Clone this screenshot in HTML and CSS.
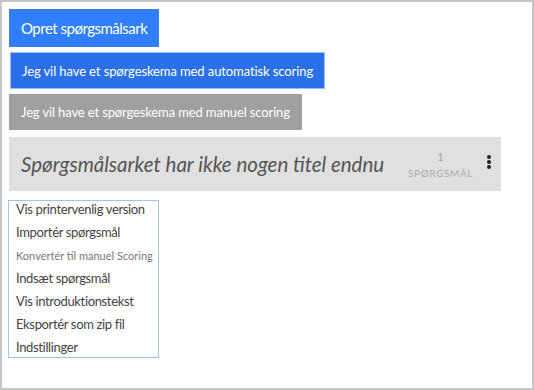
FILE: index.html
```html
<!DOCTYPE html>
<html lang="da">
<head>
  <meta charset="UTF-8" />
  <title>Spørgsmålsark</title>
  <link rel="stylesheet" href="styles.css">
</head>
<body>

  <div class="frame">
    <button class="btn btn-create">Opret spørgsmålsark</button>
    <button class="btn btn-auto">Jeg vil have et spørgeskema med automatisk scoring</button>
    <button class="btn btn-manual">Jeg vil have et spørgeskema med manuel scoring</button>

    <div class="sheet-bar">
      <div class="sheet-title">Spørgsmålsarket har ikke nogen titel endnu</div>
      <div class="sheet-count">
        <span class="count-num">1</span>
        <span class="count-label">Spørgsmål</span>
      </div>
      <div class="sheet-menu">
        <span class="dot"></span>
        <span class="dot"></span>
        <span class="dot"></span>
      </div>
    </div>

    <!-- menu under the three-dot button -->
    <ul class="dropdown">
      <li>Vis printervenlig version</li>
      <li>Importér spørgsmål</li>
      <li class="muted">Konvertér til manuel Scoring</li>
      <li>Indsæt spørgsmål</li>
      <li>Vis introduktionstekst</li>
      <li>Eksportér som zip fil</li>
      <li>Indstillinger</li>
    </ul>
  </div>

</body>
</html>
```

FILE: styles.css
```css
body {
  margin: 0;
  font-family: Lato, 'Liberation Sans', sans-serif;
}

.frame {
  box-sizing: border-box;
  width: 534px;
  height: 390px;
  border: 2px solid #c6c6c6;
  padding: 7px 7px;
}

.btn {
  display: block;
  border: none;
  color: #fff;
  font-family: inherit;
  cursor: pointer;
}

.btn-create {
  background: #2f7ffe;
  height: 38px;
  padding: 0 12px;
  font-size: 15px;
  letter-spacing: -0.5px;
}

.btn-auto {
  background: #2a70e8;
  border: 1px solid #9bbcf5;
  height: 37px;
  margin: 5px 0 0 1px;
  padding: 0 11px;
  font-size: 13px;
  letter-spacing: -0.1px;
}

.btn-manual {
  background: #a0a0a0;
  height: 36px;
  margin-top: 5px;
  padding: 0 12px;
  font-size: 13px;
  letter-spacing: -0.13px;
}

.sheet-bar {
  display: flex;
  align-items: center;
  height: 54px;
  width: 492px;
  margin-top: 7px;
  background: #e0e0e0;
  box-sizing: border-box;
  padding: 0 10px 0 12px;
}

.sheet-title {
  flex: 1;
  font-size: 20.5px;
  font-style: italic;
  color: #555;
  white-space: nowrap;
}

.sheet-count {
  display: flex;
  flex-direction: column;
  align-items: center;
  color: #a9a9a9;
  margin-right: 14px;
}

.count-num {
  font-size: 12px;
}

.count-label {
  font-size: 10px;
  text-transform: uppercase;
  letter-spacing: 0.6px;
  margin-top: 3px;
}

.sheet-menu {
  display: flex;
  flex-direction: column;
  gap: 1px;
  padding-bottom: 4px;
}

.dot {
  width: 4px;
  height: 4px;
  border-radius: 50%;
  background: #222;
}

.dropdown {
  list-style: none;
  width: 151px;
  box-sizing: border-box;
  margin: 9px 0 0 -1px;
  padding: 0 0 1px 7px;
  border: 1px solid #9ec3ec;
}

.dropdown li {
  line-height: 17px;
  margin-bottom: 6px;
  font-size: 13px;
  letter-spacing: -0.35px;
  color: #444;
}

.dropdown li:last-child {
  margin-bottom: 0;
}

.dropdown li.muted {
  font-size: 11px;
  letter-spacing: 0;
  color: #777;
}
```
